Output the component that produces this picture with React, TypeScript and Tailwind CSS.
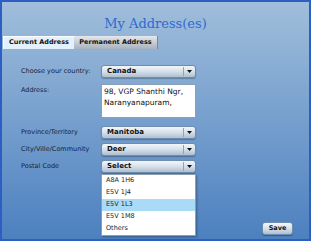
import React from 'react';

const labelCls = "text-[6.5px] leading-none text-[#14243a]";
const font = { fontFamily: '"DejaVu Sans", Verdana, sans-serif' };

const SelectBox: React.FC<{ value: string }> = ({ value }) => (
  <div className="relative flex h-[13px] w-[95px] items-center rounded-[3px] border border-[#6e8cab] bg-gradient-to-b from-[#f2f6fa] via-[#d6e0ea] to-[#aebfd1] shadow-[0_1px_1px_rgba(0,0,0,0.25)]">
    <span className="flex-1 pl-[5px] text-[7px] font-bold leading-none text-[#111]">{value}</span>
    <span className="h-[9px] w-px bg-[#8fa4ba]" />
    <span className="flex w-[11px] justify-center">
      <svg width="5" height="3" viewBox="0 0 5 3"><path d="M0 0h5L2.5 3z" fill="#111" /></svg>
    </span>
  </div>
);

const Row: React.FC<{ label: string; children: React.ReactNode }> = ({ label, children }) => (
  <div className="flex items-start">
    <div className={`w-[80px] whitespace-nowrap pt-[3px] ${labelCls}`}>{label}</div>
    {children}
  </div>
);

const codes = ["A8A 1H6", "E5V 1J4", "E5V 1L3", "E5V 1M8", "Others"];

export default function App() {
  return (
    <div style={font} className="relative h-[241px] w-[311px] overflow-hidden border-2 border-[#2d5ec4] bg-gradient-to-b from-[#a0bedb] to-[#4c80bf]">
      <h1 style={{ fontFamily: '"DejaVu Serif", Georgia, serif' }} className="pt-[14px] text-center text-[13px] leading-[16px] text-[#2e6ad0]">
        My Address(es)
      </h1>
      <div className="mt-[4px] flex pl-[1px]">
        <div className="flex h-[13px] w-[71px] items-center justify-center border-t border-l border-white bg-[#e2f1fb] text-[6.5px] font-bold text-[#111]">
          Current Address
        </div>
        <div className="flex h-[13px] w-[84px] items-center justify-center border-r border-[#7a8796] bg-gradient-to-b from-[#e4e8ec] to-[#a9b2bc] text-[6.5px] font-bold text-[#111]">
          Permanent Address
        </div>
      </div>
      <div className="mt-[16px] flex flex-col gap-[6px] pl-[19px]">
        <Row label="Choose your country:"><SelectBox value="Canada" /></Row>
        <Row label="Address:">
          <div className="h-[34px] w-[95px] border border-[#8aa0b6] bg-white px-[2px] pt-[1px] text-[7.5px] leading-[11px] text-[#111]">
            98, VGP Shanthi Ngr,<br />Naranyanapuram,
          </div>
        </Row>
        <div className="mt-[2px] flex flex-col gap-[4px]">
          <Row label="Province/Territory"><SelectBox value="Manitoba" /></Row>
          <Row label="City/Ville/Community"><SelectBox value="Deer" /></Row>
          <Row label="Postal Code">
            <div className="relative">
              <SelectBox value="Select" />
              <ul className="absolute left-0 top-[14px] z-10 w-[95px] border border-[#8aa0b6] bg-white shadow-[1px_1px_2px_rgba(0,0,0,0.3)]">
                {codes.map((c, i) => (
                  <li key={c} className={`flex h-[12px] items-center pl-[4px] text-[6.5px] text-[#222] ${i === 2 ? "bg-[#a9dbf9]" : ""}`}>
                    {c}
                  </li>
                ))}
              </ul>
            </div>
          </Row>
        </div>
      </div>
      <button className="absolute bottom-[4px] right-[16px] flex h-[13px] w-[31px] items-center justify-center rounded-[3px] border border-[#6e8cab] bg-gradient-to-b from-[#f2f6fa] via-[#d6e0ea] to-[#aebfd1] text-[6.5px] font-bold text-[#111] shadow-[0_1px_1px_rgba(0,0,0,0.3)]">
        Save
      </button>
    </div>
  );
}
